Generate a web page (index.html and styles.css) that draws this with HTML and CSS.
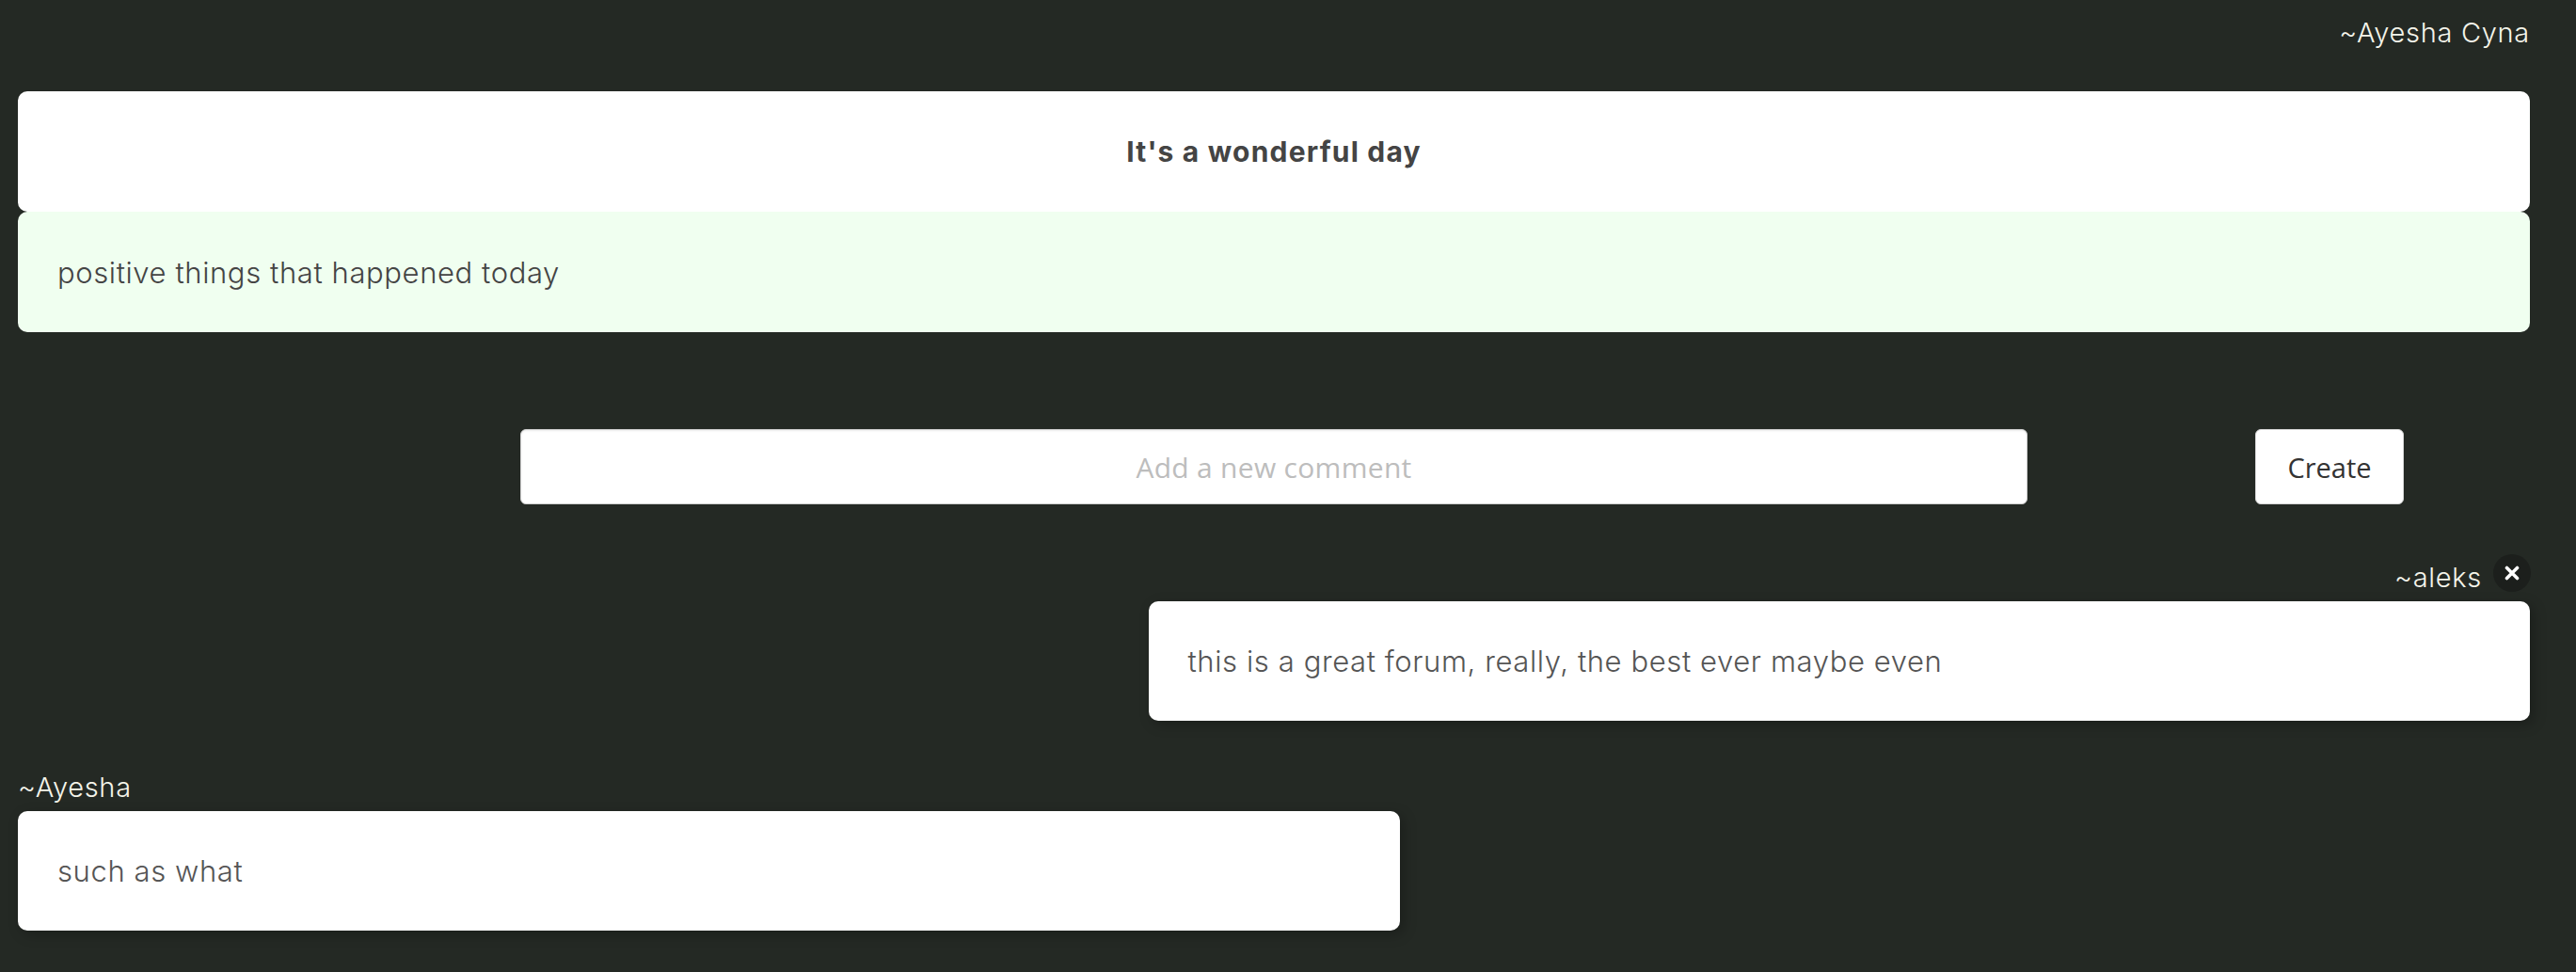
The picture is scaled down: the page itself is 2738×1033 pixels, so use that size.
FILE: index.html
```html
<!DOCTYPE html>
<html lang="en">
<head>
<meta charset="utf-8">
<title>Post</title>
<link rel="stylesheet" href="styles.css">
</head>
<body>
<div class="page">
  <div class="author-line">~Ayesha Cyna</div>
  <div class="post-title">It's a wonderful day</div>
  <div class="post-body">positive things that happened today</div>

  <form class="comment-form">
    <input class="comment-input" type="text" placeholder="Add a new comment">
    <button class="create-btn" type="button">Create</button>
  </form>

  <div class="comment comment-own">
    <div class="comment-meta">
      <span class="comment-author">~aleks</span>
      <span class="delete-btn" aria-label="delete">
        <svg width="16" height="16" viewBox="0 0 16 16"><path d="M2.5 2.5 L13.5 13.5 M13.5 2.5 L2.5 13.5" stroke="#fff" stroke-width="3.6" stroke-linecap="round"/></svg>
      </span>
    </div>
    <div class="comment-card">this is a great forum, really, the best ever maybe even</div>
  </div>

  <div class="comment comment-other">
    <div class="comment-meta">
      <span class="comment-author">~Ayesha</span>
    </div>
    <div class="comment-card">such as what</div>
  </div>
</div>
</body>
</html>
```

FILE: styles.css
```css
html, body {
  margin: 0;
  padding: 0;
  background: #242924;
}

body {
  font-family: "Inter", "Open Sans", sans-serif;
  font-weight: 300;
  min-height: 1033px;
}

.page {
  padding: 0 49px 40px 19px;
}

.author-line {
  padding-top: 15px;
  height: 40px;
  line-height: 40px;
  font-size: 29px;
  letter-spacing: 0.7px;
  text-align: right;
  color: #f4f4ea;
  margin-bottom: 42px;
}

.post-title {
  height: 128px;
  display: flex;
  align-items: center;
  justify-content: center;
  background: #ffffff;
  border-radius: 10px;
  font-size: 30px;
  letter-spacing: 1.2px;
  font-weight: 700;
  color: #444444;
}

.post-body {
  height: 128px;
  display: flex;
  align-items: center;
  padding: 0 42px;
  background: #f0fff0;
  border-radius: 10px;
  font-size: 31px;
  letter-spacing: 0.6px;
  color: #444444;
}

.comment-form {
  margin: 103px 0 0 0;
  display: flex;
  align-items: center;
  padding-left: 534px;
  gap: 242px;
}

.comment-input {
  box-sizing: border-box;
  width: 1602px;
  height: 80px;
  border: 1px solid #cfcfcf;
  border-radius: 6px;
  background: #ffffff;
  box-shadow: inset 0 1px 2px rgba(0,0,0,0.08);
  font-family: "Open Sans", "Noto Sans", sans-serif;
  font-size: 30px;
  letter-spacing: 0.3px;
  text-align: center;
  color: #333;
  outline: none;
}

.comment-input::placeholder {
  color: #bdbdbd;
}

.create-btn {
  box-sizing: border-box;
  width: 158px;
  height: 80px;
  border: 1px solid #d6d6d6;
  border-radius: 6px;
  background: #ffffff;
  font-family: "Open Sans", "Noto Sans", sans-serif;
  font-size: 29px;
  color: #333333;
  padding: 0;
}

.comment {
  display: flex;
  flex-direction: column;
}

.comment-own {
  margin-top: 58px;
  align-items: flex-end;
}

.comment-other {
  margin-top: 51px;
  align-items: flex-start;
}

.comment-meta {
  display: flex;
  align-items: flex-start;
  gap: 12px;
  height: 40px;
  margin-bottom: 5px;
}

.comment-author {
  font-size: 29px;
  letter-spacing: 0.7px;
  line-height: 40px;
  color: #f4f4ea;
}

.delete-btn {
  width: 40px;
  height: 40px;
  margin-top: -5px;
  margin-right: -1px;
  border-radius: 50%;
  background: #1c1f1c;
  display: flex;
  align-items: center;
  justify-content: center;
}

.comment-card {
  box-sizing: border-box;
  width: 55%;
  height: 127px;
  display: flex;
  align-items: center;
  padding: 0 42px;
  background: #ffffff;
  border-radius: 10px;
  font-size: 31px;
  letter-spacing: 0.6px;
  color: #555555;
  box-shadow: 4px 4px 14px rgba(0,0,0,0.25);
}
```
